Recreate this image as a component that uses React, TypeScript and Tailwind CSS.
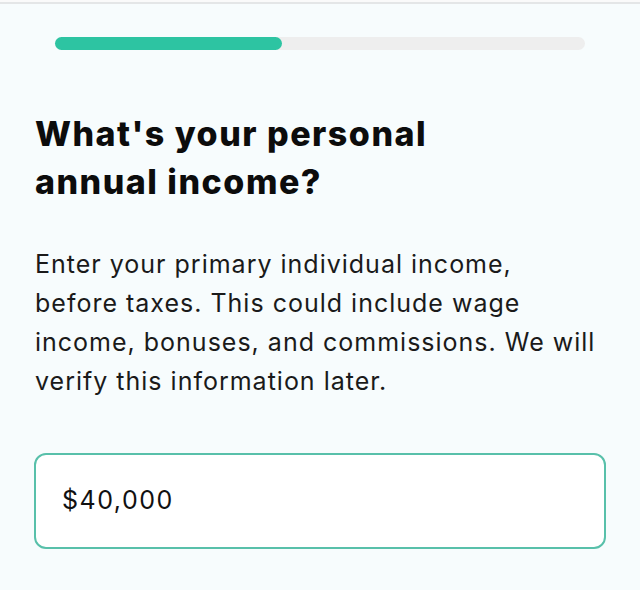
export default function App() {
  return (
    <div className="w-[640px] h-[590px] bg-[#f7fcfd] overflow-hidden" style={{ fontFamily: 'Inter, "Open Sans", sans-serif' }}>
      <div className="h-[4px] bg-[#fafafa] border-b-2 border-[#e4e6e7]" />
      <div className="px-[55px] pt-[33px]">
        <div className="h-[13px] rounded-full bg-[#eeeeee]">
          <div className="h-full w-[227px] rounded-full bg-[#2dc4a2]" />
        </div>
      </div>
      <div className="px-[35px]">
        <h1 className="mt-[60px] text-[34px] leading-[48px] font-extrabold text-[#0c0c0c] tracking-[1.5px]">
          What's your personal
          <br />
          annual income?
        </h1>
        <p className="mt-[39px] text-[25px] leading-[39px] text-[#1a1a1a] tracking-[1px]">
          Enter your primary individual income,
          <br />
          before taxes. This could include wage
          <br />
          income, bonuses, and commissions. We will
          <br />
          verify this information later.
        </p>
        <div className="mt-[52px] h-[96px] w-[572px] -ml-px rounded-[12px] border-2 border-[#58c0aa] bg-white flex items-center px-[26px]">
          <span className="text-[25px] text-[#111] tracking-[1.5px]">$40,000</span>
        </div>
      </div>
    </div>
  );
}
